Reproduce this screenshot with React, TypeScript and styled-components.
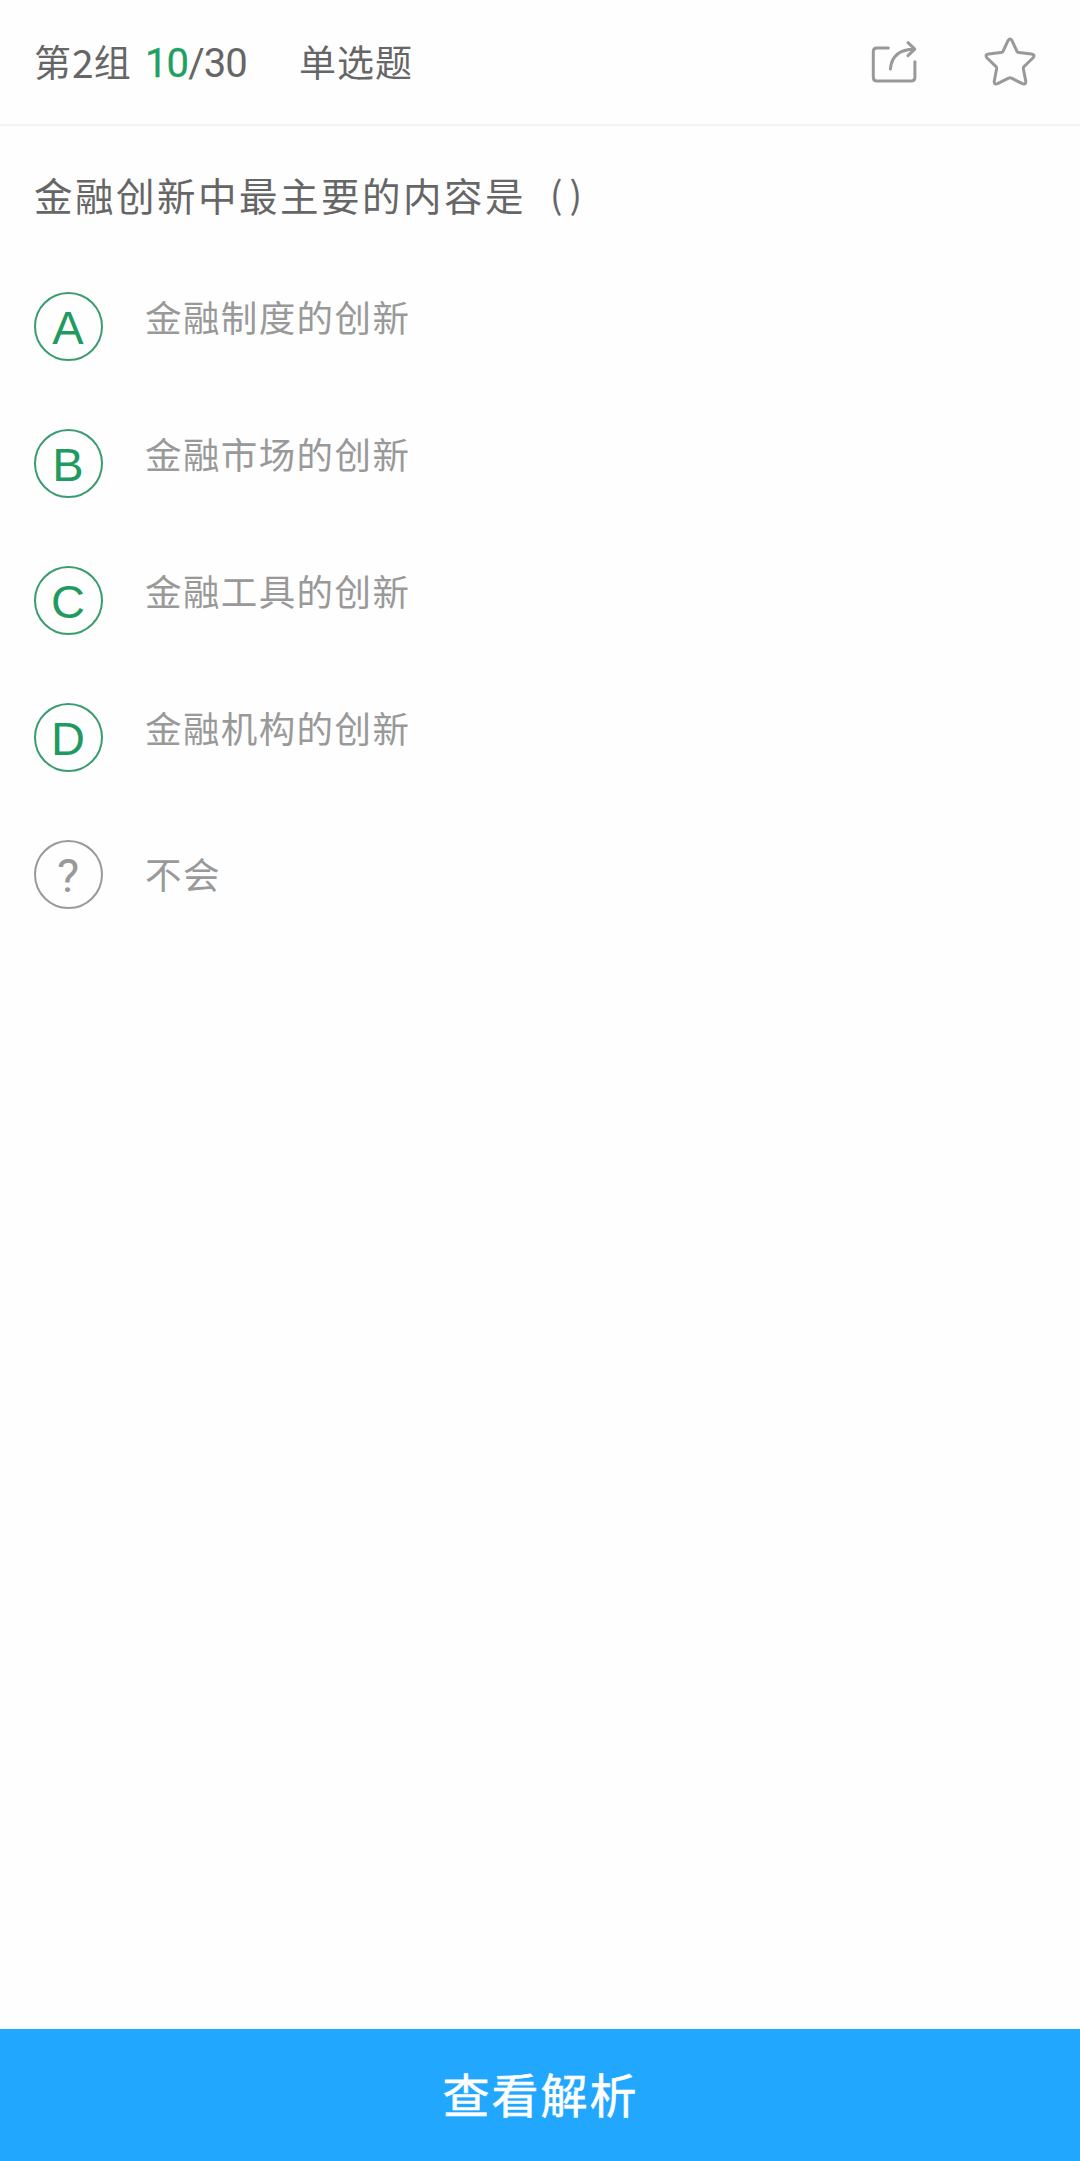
import React from 'react';
import styled, { createGlobalStyle } from 'styled-components';

const GlobalStyle = createGlobalStyle`
  * { box-sizing: border-box; }
  body {
    margin: 0;
    background: #fefefe;
    font-family: "Noto Sans CJK SC", "Noto Sans", sans-serif;
  }
`;

const Page = styled.div`
  display: flex;
  flex-direction: column;
  width: 100%;
  min-height: 2161px;
`;

const Header = styled.header`
  display: flex;
  align-items: center;
  height: 126px;
  padding: 0 42px 0 34px;
  border-bottom: 2px solid #f3f3f3;
  color: #666;
  font-size: 37px;
  line-height: 56px;
  white-space: nowrap;
`;

const Group = styled.span`
  display: flex;
  align-items: center;
  width: 97px;
  padding-bottom: 2px;
  letter-spacing: 1px;
`;

const GroupNumber = styled.span`
  font-size: 39px;
  letter-spacing: 0;
`;

const Progress = styled.span`
  width: 104px;
  margin-left: 14px;
  padding-top: 3px;
  font-family: Roboto, sans-serif;
  font-size: 40px;
  letter-spacing: -0.9px;
`;

const Current = styled.span`
  color: #1fa062;
  -webkit-text-stroke: 0.3px #1fa062;
`;

const Kind = styled.span`
  margin-left: 50px;
  padding-bottom: 2px;
  letter-spacing: 1px;
`;

const Actions = styled.div`
  display: flex;
  align-items: center;
  gap: 64px;
  margin-left: auto;
`;

const Icon = styled.svg`
  display: block;
  fill: none;
  stroke: #999;
  stroke-width: 3;
  stroke-linecap: round;
  stroke-linejoin: round;
`;

const Content = styled.main`
  flex: 1;
  padding: 39px 34px 0;
`;

const Question = styled.h1`
  display: flex;
  align-items: center;
  height: 58px;
  margin: 0;
  color: #666;
  font-size: 38.5px;
  font-weight: 400;
  line-height: 58px;
  letter-spacing: 2.5px;
  white-space: nowrap;
`;

const Brackets = styled.span`
  margin-left: 24px;
  padding-bottom: 3px;
  font-size: 37px;
  letter-spacing: 7px;
`;

const Options = styled.ul`
  display: flex;
  flex-direction: column;
  gap: 68px;
  margin: 69px 0 0;
  padding: 0;
  list-style: none;
`;

const Option = styled.li<{ $center?: boolean }>`
  display: flex;
  align-items: ${(p) => (p.$center ? 'center' : 'flex-start')};
  gap: 42px;
  height: 69px;
`;

const Badge = styled.span<{ $muted?: boolean }>`
  display: flex;
  align-items: center;
  justify-content: center;
  flex: none;
  width: 69px;
  height: 69px;
  padding: 1px 1px 0 0;
  border: 2px solid ${(p) => (p.$muted ? '#999' : '#3c9c71')};
  border-radius: 50%;
  color: ${(p) => (p.$muted ? '#999' : '#1f9a60')};
  font-family: ${(p) => (p.$muted ? 'Roboto' : '"Liberation Sans"')}, Arial, sans-serif;
  font-size: 47px;
  line-height: 1;
`;

const Label = styled.span<{ $center?: boolean }>`
  padding-bottom: ${(p) => (p.$center ? 2 : 0)}px;
  color: #999;
  font-size: 36.5px;
  line-height: ${(p) => (p.$center ? 54 : 50)}px;
  letter-spacing: 1.4px;
  white-space: nowrap;
`;

const Footer = styled.button`
  display: flex;
  align-items: center;
  justify-content: center;
  height: 132px;
  padding: 0 0 5px 1px;
  border: 0;
  background: #22a7ff;
  color: #fff;
  font-family: inherit;
  font-size: 47px;
  font-weight: 400;
  letter-spacing: 2px;
  -webkit-text-stroke: 0.6px #fff;
`;

const options = [
  { key: 'A', text: '金融制度的创新' },
  { key: 'B', text: '金融市场的创新' },
  { key: 'C', text: '金融工具的创新' },
  { key: 'D', text: '金融机构的创新' },
];

export default function App() {
  return (
    <>
      <GlobalStyle />
      <Page>
        <Header>
          <Group>
            第<GroupNumber>2</GroupNumber>组
          </Group>
          <Progress>
            <Current>10</Current>/30
          </Progress>
          <Kind>单选题</Kind>
          <Actions>
            <Icon width="50" height="50" viewBox="0 0 50 50">
              <path d="M18.3 10.9H7q-3.7 0-3.7 3.7v25.7q0 3.7 3.7 3.7h34.2q3.7 0 3.7-3.7V24.7" />
              <path d="M20.4 32C21.5 19.5 29.5 12.2 44.6 12.2M38 5.7l6.8 6.5-6.8 6.5" />
            </Icon>
            <Icon width="54" height="54" viewBox="0 0 54 54">
              <path d="M24 5.6Q26 2.6 28 5.6L33 16.4Q33.5 17.5 35 17.6L47.4 19Q51.6 19.8 48.9 23L40 31.6Q39.2 32.5 39.4 34L41.8 46.4Q41.8 50 38.4 48.7L27.5 43.2Q26 42.4 24.5 43.2L13.6 48.7Q10.2 50 10.2 46.4L12.6 34Q12.8 32.5 12 31.6L3.1 23Q.4 19.8 4.6 19L17 17.6Q18.5 17.5 19 16.4Z" />
            </Icon>
          </Actions>
        </Header>
        <Content>
          <Question>
            金融创新中最主要的内容是<Brackets>()</Brackets>
          </Question>
          <Options>
            {options.map((o) => (
              <Option key={o.key}>
                <Badge>{o.key}</Badge>
                <Label>{o.text}</Label>
              </Option>
            ))}
            <Option $center>
              <Badge $muted>?</Badge>
              <Label $center>不会</Label>
            </Option>
          </Options>
        </Content>
        <Footer>查看解析</Footer>
      </Page>
    </>
  );
}
